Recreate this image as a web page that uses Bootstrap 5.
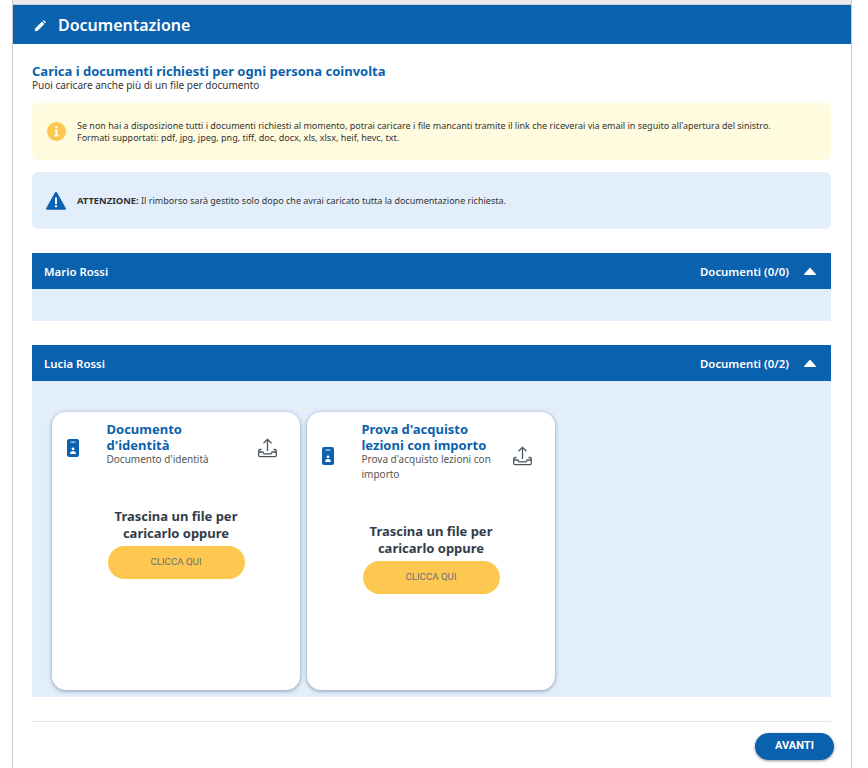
<!DOCTYPE html>
<html lang="it">
<head>
<meta charset="utf-8">
<title>Documentazione</title>
<link href="https://cdn.jsdelivr.net/npm/bootstrap@5.3.0/dist/css/bootstrap.min.css" rel="stylesheet">
<style>
body{background:#fff;font-family:"Noto Sans","Open Sans",sans-serif;color:#333;margin:0;overflow:hidden}
.frame{width:840px;margin-left:12px;border-left:1px solid #c9c9c9;border-right:1px solid #c9c9c9;height:768px;overflow:hidden}
.topstrip{height:5px;background:#e9e9e9;border-bottom:1px solid #ccc}
.mainhead{height:39px;background:#0a61ae;color:#fff;padding:2px 0 0 21px;gap:12px}
.mainhead h1{font-size:16px;font-weight:600;margin:0;line-height:37px}
.inner{padding:0 20px 0 19px}
.lead-title{font-size:13px;font-weight:700;color:#0a61ae;margin:20px 0 0;line-height:15px}
.lead-sub{font-size:10px;line-height:12px;color:#333;margin:0 0 12px}
.notice{height:57px;border-radius:6px;padding-left:14px;gap:11px;font-size:9px;line-height:12px;color:#333;margin-bottom:12px}
.notice p{margin:0}
.notice strong{font-size:9.4px}
.notice-y{background:#fffbdf}
.notice-b{background:#e2effb;margin-bottom:24px}
.notice-icon{width:20px;flex:none;display:flex;justify-content:center}
.panel-head{height:36px;background:#0a61ae;color:#fff;font-size:11.4px;font-weight:600;padding:1px 15px 0 12px}
.panel-head .caret-up{width:12px;height:8px;background:#fff;clip-path:polygon(50% 0,100% 85%,96% 100%,4% 100%,0 85%);margin-left:15px}
.panel-body-a{height:32px;background:#e2effb;margin-bottom:24px}
.panel-body-b{height:316px;background:#e2effb;padding:31px 20px 0;gap:7px}
.doc-card{width:248px;height:278px;background:#fff;border-radius:14px;box-shadow:0 1px 4px rgba(60,80,110,.55);padding:9px 23px 0 15px}
.doc-icon{width:40px;flex:none;line-height:0}
.doc-text{width:135px;flex:none;padding-bottom:8px;margin-left:-.5px}
.doc-text h3{font-size:13px;font-weight:700;line-height:16px;color:#0a61ae;margin:0}
.doc-text p{font-size:10px;line-height:15px;color:#555;margin:-1px 0 0}
.doc-up{width:19px;flex:none;margin-left:16px;line-height:0}
.drop{margin:33px -23px 0 -15px;text-align:center}
.drop p{font-size:13px;font-weight:700;line-height:17px;color:#333c4a;margin:0 auto 4px;width:140px}
.btn-clicca{width:137px;height:33px;border-radius:17px;background:#fec850;border:0;font-family:Roboto,sans-serif;font-size:9.7px;color:#6b6f76;padding:0}
.foot{border-top:1px solid #e6e6e6;margin-top:24px;padding-top:11px}
.btn-avanti{width:79px;height:27px;border-radius:14px;background:#0a61ae;border:0;color:#fff;font-family:Roboto,sans-serif;font-size:11px;font-weight:700;padding:0;margin-right:-3px;box-shadow:0 1px 3px rgba(0,0,0,.4)}
</style>
</head>
<body>
<div class="frame">
  <div class="topstrip"></div>
  <div class="mainhead d-flex align-items-center">
    <svg width="12" height="12" viewBox="0 0 12 12" fill="#fff"><path d="M.8 11.200l.5-2.900 6.700-6.700 2.400 2.400-6.700 6.700z"/><path d="M8.700.9l.4-.4a.8.8 0 0 1 1.100 0l1.300 1.300a.8.8 0 0 1 0 1.100l-.4.4z"/></svg>
    <h1>Documentazione</h1>
  </div>
  <div class="inner">
    <h2 class="lead-title">Carica i documenti richiesti per ogni persona coinvolta</h2>
    <p class="lead-sub">Puoi caricare anche più di un file per documento</p>

    <div class="notice notice-y d-flex align-items-center">
      <div class="notice-icon">
        <svg width="19" height="19" viewBox="0 0 19 19"><circle cx="9.500" cy="9.500" r="9.500" fill="#fec850"/><rect x="8.500" y="4.200" width="2" height="2" fill="#fff"/><path d="M7.500 7.800h3v5.500h1.200v1.300H7.300v-1.300h1.200V9H7.500z" fill="#fff"/></svg>
      </div>
      <div>
        <p>Se non hai a disposizione tutti i documenti richiesti al momento, potrai caricare i file mancanti tramite il link che riceverai via email in seguito all'apertura del sinistro.</p>
        <p>Formati supportati: pdf, jpg, jpeg, png, tiff, doc, docx, xls, xlsx, heif, hevc, txt.</p>
      </div>
    </div>

    <div class="notice notice-b d-flex align-items-center">
      <div class="notice-icon">
        <svg width="20" height="18" viewBox="0 0 20 18"><path d="M10 0c.5 0 .9.3 1.200.8l8.500 15.200c.4.800 0 1.700-.9 1.700H1.200c-.9 0-1.300-.9-.9-1.700L8.800.8C9.100.3 9.500 0 10 0z" fill="#0a61ae"/><rect x="9" y="5.500" width="2" height="6.500" fill="#fff"/><rect x="9" y="13.300" width="2" height="2" fill="#fff"/></svg>
      </div>
      <p><strong class="fw-bold">ATTENZIONE:</strong> Il rimborso sarà gestito solo dopo che avrai caricato tutta la documentazione richiesta.</p>
    </div>

    <div class="panel-head d-flex align-items-center justify-content-between">
      <span>Mario Rossi</span>
      <span class="d-flex align-items-center">Documenti (0/0)<span class="caret-up"></span></span>
    </div>
    <div class="panel-body-a"></div>

    <div class="panel-head d-flex align-items-center justify-content-between">
      <span>Lucia Rossi</span>
      <span class="d-flex align-items-center">Documenti (0/2)<span class="caret-up"></span></span>
    </div>
    <div class="panel-body-b d-flex align-items-start">
      <div class="doc-card">
        <div class="d-flex align-items-center">
          <div class="doc-icon">
            <svg width="12" height="18" viewBox="0 0 12 18"><rect width="12" height="18" rx="2" fill="#0a61ae"/><rect x="3.500" y="2.500" width="5" height="1.200" fill="#c7dcf0"/><circle cx="6" cy="9.800" r="1.400" fill="#fff"/><path d="M3 15c0-2 1.300-3 3-3s3 1 3 3z" fill="#fff"/></svg>
          </div>
          <div class="doc-text">
            <h3>Documento d'identità</h3>
            <p>Documento d'identità</p>
          </div>
          <div class="doc-up">
            <svg width="19" height="20" viewBox="0 0 19 20" fill="none" stroke="#4a5560" stroke-width="1.300"><path d="M9.500 13V1.500M5.500 5.300l4-4 4 4"/><path d="M3.500 11.500H2a1.300 1.300 0 0 0-1.300 1.300v4.500A1.300 1.300 0 0 0 2 18.600h15a1.300 1.300 0 0 0 1.300-1.300v-4.500a1.300 1.300 0 0 0-1.300-1.300h-1.500M.8 14h4l1.200 1.800h7l1.200-1.800h4"/></svg>
          </div>
        </div>
        <div class="drop">
          <p>Trascina un file per caricarlo oppure</p>
          <button class="btn btn-clicca" type="button">CLICCA QUI</button>
        </div>
      </div>

      <div class="doc-card">
        <div class="d-flex align-items-center">
          <div class="doc-icon">
            <svg width="12" height="18" viewBox="0 0 12 18"><rect width="12" height="18" rx="2" fill="#0a61ae"/><rect x="3.500" y="2.500" width="5" height="1.200" fill="#c7dcf0"/><circle cx="6" cy="9.800" r="1.400" fill="#fff"/><path d="M3 15c0-2 1.300-3 3-3s3 1 3 3z" fill="#fff"/></svg>
          </div>
          <div class="doc-text">
            <h3>Prova d'acquisto lezioni con importo</h3>
            <p>Prova d'acquisto lezioni con importo</p>
          </div>
          <div class="doc-up">
            <svg width="19" height="20" viewBox="0 0 19 20" fill="none" stroke="#4a5560" stroke-width="1.300"><path d="M9.500 13V1.500M5.500 5.300l4-4 4 4"/><path d="M3.500 11.500H2a1.300 1.300 0 0 0-1.300 1.300v4.500A1.300 1.300 0 0 0 2 18.600h15a1.300 1.300 0 0 0 1.300-1.300v-4.500a1.300 1.300 0 0 0-1.300-1.300h-1.500M.8 14h4l1.200 1.800h7l1.200-1.800h4"/></svg>
          </div>
        </div>
        <div class="drop">
          <p>Trascina un file per caricarlo oppure</p>
          <button class="btn btn-clicca" type="button">CLICCA QUI</button>
        </div>
      </div>
    </div>

    <div class="foot d-flex justify-content-end">
      <button class="btn btn-avanti" type="button">AVANTI</button>
    </div>
  </div>
</div>
<script src="https://cdn.jsdelivr.net/npm/bootstrap@5.3.0/dist/js/bootstrap.bundle.min.js"></script>
</body>
</html>
